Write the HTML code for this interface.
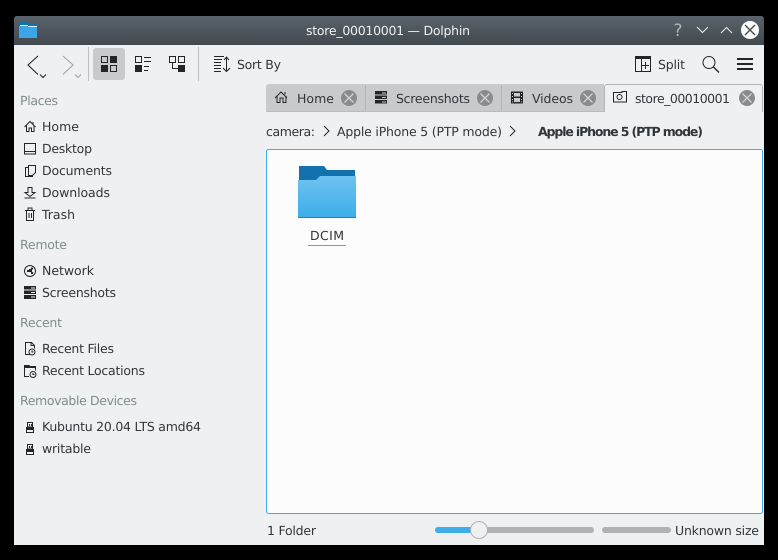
<!DOCTYPE html>
<html><head><meta charset="utf-8"><title>store_00010001 — Dolphin</title>
<style>
html,body{margin:0;padding:0;background:#000;width:778px;height:560px;overflow:hidden}
svg{display:block}
text{font-family:"DejaVu Sans","Liberation Sans",sans-serif;font-size:12.5px;fill:#31363b;text-rendering:geometricPrecision}
.g{fill:#7f8c8d}
.i{fill:none;stroke:#232629;stroke-width:1}
.d{fill:#232629}
</style></head><body>
<svg width="778" height="560" viewBox="0 0 778 560" xmlns="http://www.w3.org/2000/svg" shape-rendering="crispEdges">
<defs>
<linearGradient id="tb" x1="0" y1="0" x2="0" y2="1"><stop offset="0" stop-color="#5a636b"/><stop offset="1" stop-color="#42494f"/></linearGradient>
<linearGradient id="fo" x1="0" y1="0" x2="0" y2="1"><stop offset="0" stop-color="#70c2f0"/><stop offset="1" stop-color="#3daee9"/></linearGradient>
</defs>
<rect width="778" height="560" fill="#000"/>
<path d="M14 19a3 3 0 0 1 3-3h744a3 3 0 0 1 3 3v26H14z" fill="url(#tb)" shape-rendering="auto"/>
<rect x="14" y="45" width="750" height="500" fill="#eff0f1"/>

<!-- title icon -->
<path d="M19 22h8l2 2h8v14H19z" fill="#1272ad"/><rect x="20" y="25" width="8" height="1" fill="#e8f4fb"/><rect x="28" y="26" width="9" height="1" fill="#e8f4fb"/><path d="M19 26h9v1h9v11H19z" fill="#3ba5ea"/>
<text x="388" y="35" text-anchor="middle" textLength="164" lengthAdjust="spacing" style="fill:#eff0f1">store_00010001 — Dolphin</text>

<!-- window buttons -->
<text x="678" y="36" text-anchor="middle" style="font-size:17px;fill:#aeb3b7">?</text>
<g shape-rendering="auto" fill="none" stroke="#eff0f1" stroke-width="1">
<path d="M697 27l5.500 5.500L708 27"/><path d="M721 33l5.500-5.500L732 33"/>
<circle cx="750" cy="30" r="9" fill="#fcfcfc" stroke="none"/>
<path d="M745 25l10 10M755 25l-10 10" stroke="#42494f" stroke-width="1.300"/>
</g>

<!-- toolbar -->
<g shape-rendering="auto" fill="none" stroke="#232629" stroke-width="1.100">
<path d="M38 56l-10 9 10 9.500"/><path d="M40 74.500l3 3 3-3"/>
</g>
<g shape-rendering="auto" fill="none" stroke="#9fa4a8" stroke-width="1.100">
<path d="M63 56l10 9-10 9.500"/><path d="M75 74.500l3 3 3-3"/>
</g>
<rect x="88" y="47" width="1" height="34" fill="#bcbebf"/>
<rect x="198" y="47" width="1" height="34" fill="#bcbebf"/>
<rect x="93" y="48" width="32" height="32" rx="3" fill="#c9cacb" shape-rendering="auto"/>
<!-- icons view -->
<rect x="101.500" y="56.500" width="6" height="6" class="i"/><rect x="110" y="56" width="7" height="7" class="d"/><rect x="101" y="65" width="7" height="7" class="d"/><rect x="110.500" y="65.500" width="6" height="6" class="i"/>
<!-- compact -->
<rect x="135.500" y="56.500" width="6" height="6" class="i"/><rect x="144" y="57" width="7" height="1" class="d"/><rect x="144" y="61" width="7" height="1" class="d"/><rect x="135" y="65" width="7" height="7" class="d"/><rect x="144" y="66" width="5" height="1" class="d"/><rect x="144" y="70" width="4" height="1" class="d"/>
<!-- details -->
<rect x="169.500" y="56.500" width="6" height="6" class="i"/><rect x="178.500" y="56.500" width="6" height="6" class="i"/><rect x="178" y="65" width="7" height="7" class="d"/><path d="M172.500 63v5.500h5.500" class="i"/>
<!-- sort -->
<g class="d"><rect x="214" y="56" width="10" height="1"/><rect x="214" y="59" width="8" height="1"/><rect x="214" y="62" width="7" height="1"/><rect x="214" y="65" width="7" height="1"/><rect x="214" y="68" width="7" height="1"/><rect x="214" y="71" width="7" height="1"/></g>
<g shape-rendering="auto" class="i"><path d="M226.500 58v13.500M223 68l3.500 3.500 3.500-3.500M224 60l2.500-3 2.500 3"/></g>
<text x="237" y="69" textLength="44" lengthAdjust="spacing">Sort By</text>
<!-- split -->
<rect x="635.500" y="56.500" width="15" height="15" class="i"/><rect x="635" y="56" width="16" height="3" class="d"/><rect x="641" y="59" width="1" height="12" class="d"/><rect x="645" y="62" width="1" height="7" class="d"/><rect x="642" y="65" width="7" height="1" class="d"/>
<text x="658" y="69" textLength="27" lengthAdjust="spacing">Split</text>
<g shape-rendering="auto" class="i"><circle cx="709" cy="62.500" r="6"/><path d="M713.500 67l5.500 5.500" stroke-width="1.300"/></g>
<rect x="737" y="58" width="16" height="2" class="d"/><rect x="737" y="63" width="16" height="2" class="d"/><rect x="737" y="68" width="16" height="2" class="d"/>

<!-- sidebar -->
<text class="g" x="20" y="105" textLength="38" lengthAdjust="spacing">Places</text>
<text x="42" y="131" textLength="37" lengthAdjust="spacing">Home</text>
<text x="42" y="153" textLength="50" lengthAdjust="spacing">Desktop</text>
<text x="42" y="175" textLength="70" lengthAdjust="spacing">Documents</text>
<text x="42" y="197" textLength="68" lengthAdjust="spacing">Downloads</text>
<text x="42" y="219" textLength="33" lengthAdjust="spacing">Trash</text>
<text class="g" x="20" y="249" textLength="47" lengthAdjust="spacing">Remote</text>
<text x="42" y="275" textLength="52" lengthAdjust="spacing">Network</text>
<text x="42" y="297" textLength="74" lengthAdjust="spacing">Screenshots</text>
<text class="g" x="20" y="327" textLength="42" lengthAdjust="spacing">Recent</text>
<text x="42" y="353" textLength="72" lengthAdjust="spacing">Recent Files</text>
<text x="42" y="375" textLength="103" lengthAdjust="spacing">Recent Locations</text>
<text class="g" x="20" y="405" textLength="117" lengthAdjust="spacing">Removable Devices</text>
<text x="42" y="431" textLength="159" lengthAdjust="spacing">Kubuntu 20.04 LTS amd64</text>
<text x="42" y="453" textLength="49" lengthAdjust="spacing">writable</text>

<!-- sidebar icons -->
<g shape-rendering="auto" class="i">
<path d="M24.500 127l5.500-5.500 5.500 5.500M26.500 125.500v6h2.500v-3.500h2.500v3.500h2.500v-6M33 122v2"/>
<rect x="24.500" y="143.500" width="11" height="10.500"/><path d="M25 151.500h10"/>
<path d="M28.500 165.500h7v7l-3 3h-4zM28.500 167.500h-3v9h7v-1.500"/>
<path d="M28 187.500h4v5h3l-5 4-5-4h3zM24.500 198h11"/>
<path d="M25 210.500h10M28 210v-2h4v2M26.500 210.500v10h7v-10M29 213v5M31.500 213v5"/>
<circle cx="30" cy="271" r="5.500"/>
</g>
<g class="d"><rect x="29" y="269" width="3" height="3"/><rect x="27" y="270" width="2" height="2"/><rect x="31" y="267.500" width="2" height="2"/><rect x="31" y="272" width="2" height="2"/></g>
<g class="d"><rect x="24" y="286" width="12" height="3.500"/><rect x="24" y="290.500" width="12" height="3.500"/><rect x="24" y="295" width="12" height="4"/></g>
<g fill="#eff0f1"><rect x="31" y="287.500" width="4" height="1"/><rect x="31" y="292" width="4" height="1"/><rect x="31" y="296.500" width="4" height="1"/></g>
<g shape-rendering="auto" class="i">
<path d="M30 354.500h-4.500v-12h6l3 3v3M31 342.500v3h3.500"/>
<circle cx="32" cy="352" r="3"/><path d="M32 350.500v1.500h1.500"/>
<path d="M29 376.500h-4.500v-9h11v3"/>
<circle cx="33" cy="374.500" r="3"/><path d="M33 373v1.500h1.500"/>
</g>
<path d="M24 365h5l1 1h6v2H24z" class="d"/>
<g class="i"><rect x="27.500" y="422.500" width="5" height="4.500"/><rect x="26.500" y="427.500" width="7" height="5"/><rect x="27.500" y="444.500" width="5" height="4.500"/><rect x="26.500" y="449.500" width="7" height="5"/></g>
<rect x="26" y="427" width="8" height="3" class="d"/><rect x="26" y="449" width="8" height="3" class="d"/>
<rect x="29" y="424" width="1" height="2" class="d"/><rect x="31" y="424" width="1" height="2" class="d"/><rect x="29" y="446" width="1" height="2" class="d"/><rect x="31" y="446" width="1" height="2" class="d"/>

<!-- tabs -->
<path d="M266 87a3 3 0 0 1 3-3h335v27H266z" fill="#c9cacb" shape-rendering="auto"/>
<rect x="266" y="111" width="338" height="1" fill="#b9bbbc"/>
<rect x="365" y="85" width="1" height="26" fill="#b2b4b5"/>
<rect x="501" y="85" width="1" height="26" fill="#b2b4b5"/>
<path d="M604.500 112V87a2.500 2.500 0 0 1 2.500-2.500h153a2.500 2.500 0 0 1 2.500 2.500v25" fill="#eff0f1" stroke="#b2b4b5" shape-rendering="auto"/>
<g shape-rendering="auto" class="i"><path d="M275 98l6-6 6 6M277 96v6.500h3V98h3v4.500h3V96M285 92v2.500"/></g>
<text x="297" y="103" textLength="37" lengthAdjust="spacing">Home</text>
<g class="d"><rect x="375" y="91" width="12" height="3.500"/><rect x="375" y="95.500" width="12" height="3.500"/><rect x="375" y="100" width="12" height="3.500"/></g>
<g fill="#c9cacb"><rect x="382" y="92.500" width="4" height="1"/><rect x="382" y="97" width="4" height="1"/><rect x="382" y="101.500" width="4" height="1"/></g>
<text x="396" y="103" textLength="74" lengthAdjust="spacing">Screenshots</text>
<rect x="511" y="91.500" width="12" height="12" class="d"/><g fill="#c9cacb"><rect x="514" y="93" width="6" height="3.500"/><rect x="514" y="98" width="6" height="4"/><rect x="512" y="93" width="1" height="1"/><rect x="512" y="96" width="1" height="1"/><rect x="512" y="99" width="1" height="1"/><rect x="512" y="101.500" width="1" height="1"/><rect x="521" y="93" width="1" height="1"/><rect x="521" y="96" width="1" height="1"/><rect x="521" y="99" width="1" height="1"/><rect x="521" y="101.500" width="1" height="1"/></g>
<text x="532" y="103" textLength="41" lengthAdjust="spacing">Videos</text>
<path d="M613.500 92.500h8.500v-1h4.500v10.500h-13z" class="i"/><circle cx="619.500" cy="97" r="2.500" class="i" shape-rendering="auto"/>
<text x="635" y="103" textLength="95" lengthAdjust="spacing">store_00010001</text>
<g shape-rendering="auto">
<g fill="#8a8b8c"><circle cx="349" cy="98" r="8"/><circle cx="485" cy="98" r="8"/><circle cx="588" cy="98" r="8"/><circle cx="747" cy="98" r="8"/></g>
<g stroke="#dcddde" stroke-width="1.200"><path d="M344.500 93.500l9 9M353.500 93.500l-9 9M480.500 93.500l9 9M489.500 93.500l-9 9M583.500 93.500l9 9M592.500 93.500l-9 9M742.500 93.500l9 9M751.500 93.500l-9 9"/></g>
</g>

<!-- breadcrumb -->
<text x="266" y="136" textLength="49" lengthAdjust="spacing">camera:</text>
<g shape-rendering="auto" class="i"><path d="M324 126l5 5-5 5M510 126l5 5-5 5"/></g>
<text x="337" y="136" textLength="165" lengthAdjust="spacing">Apple iPhone 5 (PTP mode)</text>
<text x="538" y="136" textLength="165" lengthAdjust="spacing" style="font-weight:bold">Apple iPhone 5 (PTP mode)</text>

<!-- view -->
<rect x="266.500" y="149.500" width="496" height="364" rx="2" fill="#fcfcfc" stroke="#3daee9" shape-rendering="auto"/>
<path d="M299 166h25l3 4h28v10h-56z" fill="#1272ad" shape-rendering="auto"/>
<path d="M298 180h18l4-4h36v41h-58z" fill="url(#fo)" shape-rendering="auto"/>
<rect x="298" y="217" width="58" height="1" fill="#2a7fb0"/>
<text x="327" y="240" text-anchor="middle" textLength="34" lengthAdjust="spacing">DCIM</text>
<rect x="308" y="245" width="38" height="1" fill="#3daee9"/>

<!-- status -->
<text x="267" y="535" textLength="49" lengthAdjust="spacing">1 Folder</text>
<g shape-rendering="auto">
<rect x="435" y="527" width="159" height="6" rx="3" fill="#b0b1b2"/>
<path d="M438 527h36v6h-36a3 3 0 0 1 0-6z" fill="#3daee9"/>
<circle cx="479" cy="530" r="8.500" fill="#eff0f1" stroke="#b0b1b2"/>
<rect x="602" y="527" width="69" height="6" rx="3" fill="#b0b1b2"/>
</g>
<text x="675" y="535" textLength="84" lengthAdjust="spacing">Unknown size</text>
</svg>
</body></html>
